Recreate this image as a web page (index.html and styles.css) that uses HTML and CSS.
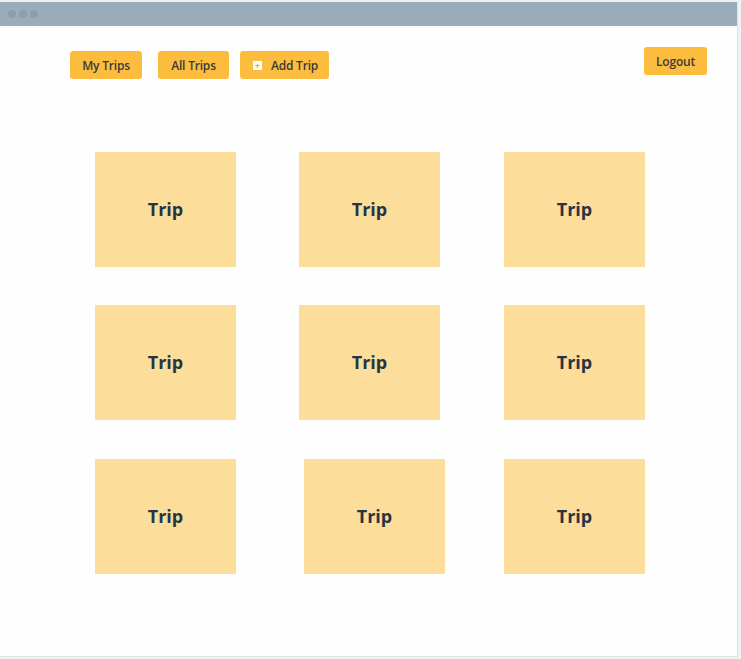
FILE: index.html
```html
<!DOCTYPE html>
<html>
<head>
<meta charset="utf-8">
<link rel="stylesheet" href="styles.css">
</head>
<body>
<div class="window">
  <div class="titlebar">
    <span class="dot"></span><span class="dot"></span><span class="dot"></span>
  </div>
  <div class="content">
    <div class="nav">
      <div class="nav-left">
        <button class="btn btn-my">My Trips</button>
        <button class="btn btn-all">All Trips</button>
        <button class="btn btn-add"><span class="plus">+</span>Add Trip</button>
      </div>
      <button class="btn btn-logout">Logout</button>
    </div>
    <div class="grid">
      <div class="row">
        <div class="card">Trip</div>
        <div class="card">Trip</div>
        <div class="card">Trip</div>
      </div>
      <div class="row">
        <div class="card">Trip</div>
        <div class="card">Trip</div>
        <div class="card">Trip</div>
      </div>
      <div class="row">
        <div class="card">Trip</div>
        <div class="card shifted">Trip</div>
        <div class="card">Trip</div>
      </div>
    </div>
  </div>
</div>
</body>
</html>
```
FILE: styles.css
```css
html, body {
  margin: 0;
  padding: 0;
  background: #eef2f5;
  font-family: "Open Sans", "Liberation Sans", sans-serif;
}
body {
  padding-top: 2px;
  width: 741px;
  height: 659px;
  box-sizing: border-box;
}
.window {
  width: 738px;
  height: 655px;
  background: #fefefe;
  border-right: 1px solid #dfe5ea;
  border-bottom: 1px solid #e2e2e2;
  box-sizing: border-box;
  display: flex;
  flex-direction: column;
}
.titlebar {
  height: 24px;
  background: #9aacb9;
  display: flex;
  align-items: center;
  padding-left: 8px;
  gap: 3px;
  flex-shrink: 0;
}
.dot {
  width: 8px;
  height: 8px;
  border-radius: 50%;
  background: #8c9eab;
}
.content {
  flex: 1;
}
.nav {
  display: flex;
  justify-content: space-between;
  align-items: flex-start;
  padding: 21px 30px 0 70px;
}
.nav-left {
  display: flex;
  margin-top: 4px;
}
.btn {
  height: 28px;
  border: none;
  border-radius: 3px;
  background: #fcbd3e;
  color: #3a3a3a;
  font-family: "Open Sans", "Liberation Sans", sans-serif;
  font-size: 12px;
  font-weight: 600;
  padding: 0;
  display: flex;
  align-items: center;
  justify-content: center;
  letter-spacing: -0.2px;
}
.btn-my { width: 72px; }
.btn-all { width: 71px; margin-left: 16px; }
.btn-add { width: 89px; margin-left: 11px; }
.btn-logout { width: 63px; }
.plus {
  width: 9px;
  height: 9px;
  background: #fff;
  color: #f3a51d;
  font-size: 9px;
  line-height: 9px;
  text-align: center;
  font-weight: 700;
  margin-right: 9px;
  margin-left: 2px;
}
.grid {
  display: flex;
  flex-direction: column;
  gap: 38px;
  padding: 73px 0 0 95px;
}
.row:nth-child(3) { margin-top: 1px; }
.row {
  display: flex;
  gap: 63px;
}
.row .card:nth-child(3) { margin-left: 1px; }
.card {
  width: 141px;
  height: 115px;
  background: #fddd9a;
  display: flex;
  align-items: center;
  justify-content: center;
  color: #263545;
  font-size: 18px;
  font-weight: 700;
  padding-bottom: 2px;
  box-sizing: border-box;
}
.card.shifted { margin-left: 5px; margin-right: -5px; }
```
